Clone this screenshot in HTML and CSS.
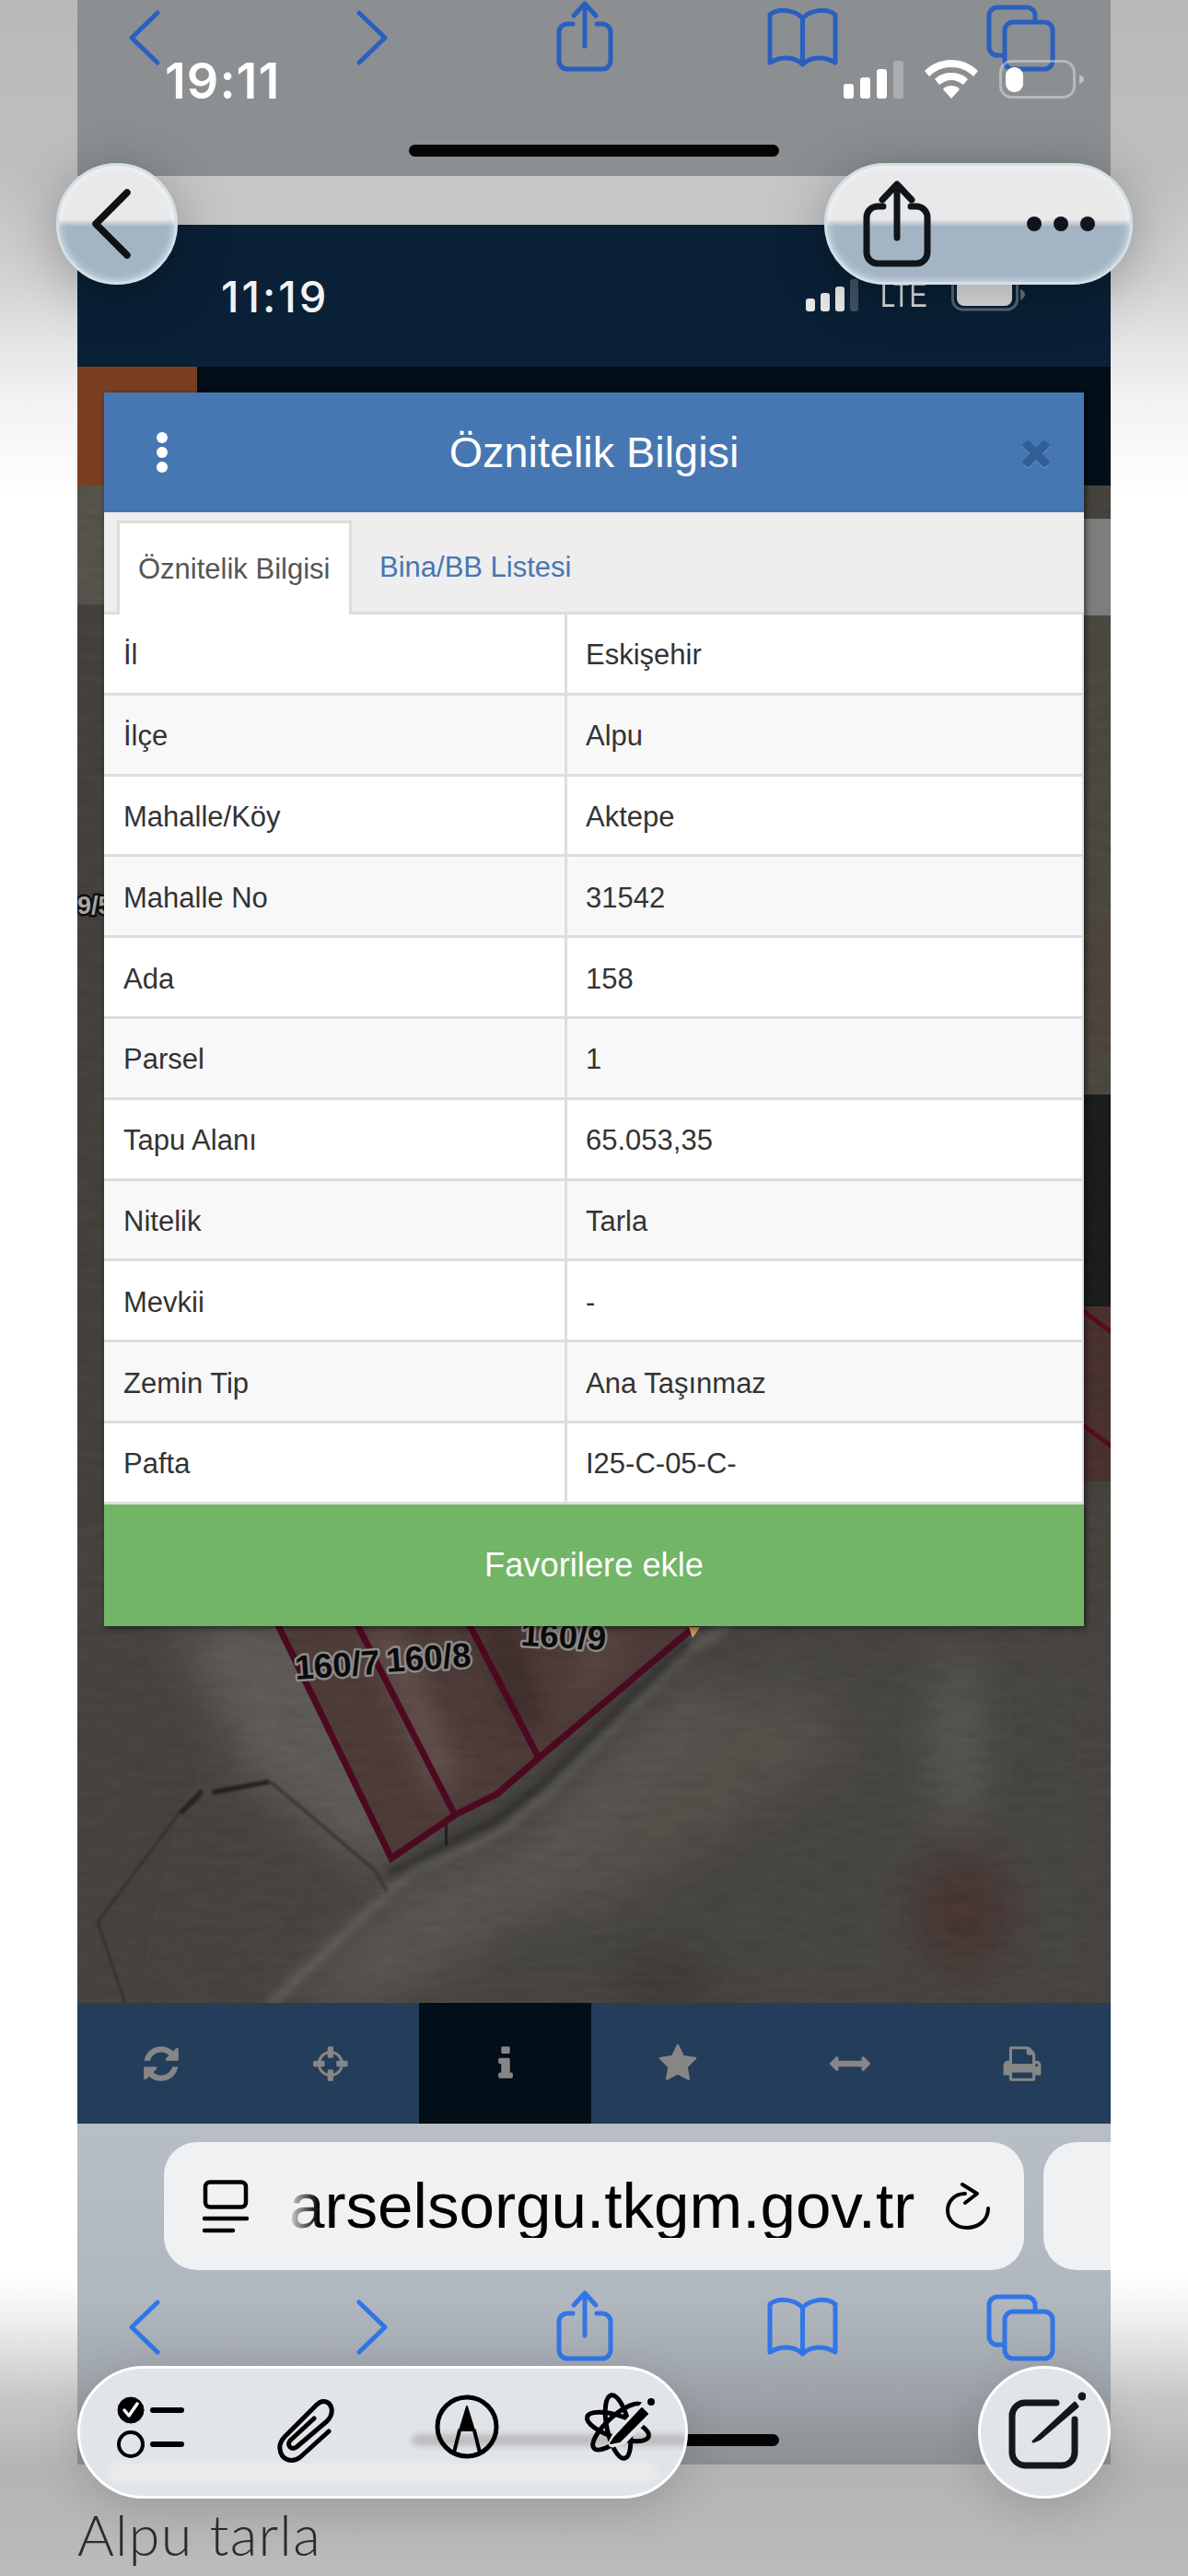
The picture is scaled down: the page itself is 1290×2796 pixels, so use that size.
FILE: index.html
```html
<!DOCTYPE html>
<html lang="tr">
<head>
<meta charset="utf-8">
<title>Öznitelik Bilgisi</title>
<link rel="stylesheet" href="styles.css">
</head>
<body>
<svg class="defs" width="0" height="0" aria-hidden="true">
  <symbol id="nav" viewBox="0 0 1122 80">
    <g fill="none" stroke="currentColor" stroke-width="5" stroke-linecap="round" stroke-linejoin="round">
      <path d="M87 14 L59 41 L87 68"/>
      <path d="M306 14 L334 41 L306 68"/>
      <path d="M538 26 H532 a9 9 0 0 0 -9 9 V66 a9 9 0 0 0 9 9 H570 a9 9 0 0 0 9 -9 V35 a9 9 0 0 0 -9 -9 H564"/>
      <path d="M551 50 V5 M539 17 L551 4 L563 17"/>
      <path d="M787.500 20 C780 11 762 8 752 16 V68 C765 60 780 62 787.500 70 C795 62 810 60 823 68 V16 C813 8 795 11 787.500 20 Z" stroke-width="5"/>
      <path d="M787.500 20 V68"/>
      <rect x="1007" y="24" width="52" height="51" rx="9"/>
      <path d="M1006 60 H999 a9 9 0 0 1 -9 -9 V17 a9 9 0 0 1 9 -9 H1031 a9 9 0 0 1 9 9 V23"/>
    </g>
  </symbol>
</svg>

<div class="page">
  <div class="phone">
    <section class="browser browser-top">
      <svg class="nav" viewBox="0 0 1122 80"><use href="#nav"/></svg>
      <div class="home"></div>
      <div class="status status-outer">
        <span class="time">19:11</span>
        <div class="status-icons">
          <svg width="65" height="42" viewBox="0 0 65 42">
            <rect x="0" y="26" width="11" height="16" rx="3" fill="#fff"/>
            <rect x="18" y="19" width="11" height="23" rx="3" fill="#fff"/>
            <rect x="36" y="10" width="11" height="32" rx="3" fill="#fff"/>
            <rect x="54" y="1" width="11" height="41" rx="3" fill="#fff" fill-opacity=".28"/>
          </svg>
          <svg width="58" height="42" viewBox="0 0 58 42">
            <path d="M29 0 C40 0 50 4 58 12 L53 18 C46 11 38 8 29 8 C20 8 12 11 5 18 L0 12 C8 4 18 0 29 0 Z M29 14 C36 14 42 16 47 21 L42 27 C38 24 34 22 29 22 C24 22 20 24 16 27 L11 21 C16 16 22 14 29 14 Z M29 28 C33 28 36 29 38 32 L29 42 L20 32 C22 29 25 28 29 28 Z" fill="#fff"/>
          </svg>
          <svg width="92" height="42" viewBox="0 0 92 42">
            <rect x="1.500" y="1.500" width="80" height="39" rx="12" fill="none" stroke="#fff" stroke-opacity=".38" stroke-width="3"/>
            <rect x="7" y="8" width="19" height="27" rx="9" fill="#fff"/>
            <path d="M87 16 C90 17 92 19 92 21 C92 23 90 25 87 26 Z" fill="#fff" fill-opacity=".45"/>
          </svg>
        </div>
      </div>
    </section>

    <div class="strip"></div>

    <div class="status status-inner">
      <span class="time time-small">11:19</span>
      <div class="status-icons status-icons-small">
        <svg width="57" height="35" viewBox="0 0 57 35">
          <rect x="0" y="21" width="10" height="14" rx="3" fill="#e8e8e8"/>
          <rect x="16" y="15" width="10" height="20" rx="3" fill="#e8e8e8"/>
          <rect x="32" y="8" width="10" height="27" rx="3" fill="#e8e8e8"/>
          <rect x="48" y="0" width="9" height="35" rx="3" fill="#e8e8e8" fill-opacity=".25"/>
        </svg>
        <span class="lte">LTE</span>
        <svg width="80" height="35" viewBox="0 0 80 35">
          <rect x="1.500" y="-4" width="70" height="37" rx="11" fill="none" stroke="#e8e8e8" stroke-opacity=".35" stroke-width="3"/>
          <rect x="6" y="-2" width="60" height="31" rx="8" fill="#dfdfdf"/>
          <path d="M75 11 C78 12 80 14 80 17 C80 19 78 21 75 23 Z" fill="#e8e8e8" fill-opacity=".4"/>
        </svg>
      </div>
    </div>

    <main class="stage">
      <svg class="map" viewBox="84 398 1122 1776" preserveAspectRatio="none" aria-hidden="true">
        <defs>
          <filter id="soft" x="-20%" y="-20%" width="140%" height="140%"><feGaussianBlur stdDeviation="14"/></filter>
          <filter id="softer" x="-30%" y="-30%" width="160%" height="160%"><feGaussianBlur stdDeviation="24"/></filter>
          <filter id="edge" x="-10%" y="-10%" width="120%" height="120%"><feGaussianBlur stdDeviation="4"/></filter>
          <filter id="hair" x="-10%" y="-10%" width="120%" height="120%"><feGaussianBlur stdDeviation="1"/></filter>
          <filter id="grain" x="0" y="0" width="100%" height="100%">
            <feTurbulence type="fractalNoise" baseFrequency="0.03 0.12" numOctaves="3" seed="7"/>
            <feColorMatrix values="0 0 0 0 0  0 0 0 0 0  0 0 0 0 0  0.9 0 0 0 -0.28"/>
          </filter>
        </defs>
        <rect x="84" y="398" width="1122" height="1776" fill="#484541"/>
        <!-- strips beside the dialog -->
        <rect x="84" y="526" width="29" height="130" fill="#57554e"/>
        <rect x="84" y="656" width="29" height="1000" fill="#46423e"/>
        <rect x="1177" y="668" width="29" height="520" fill="#4d4943"/>
        <rect x="1177" y="1000" width="29" height="140" fill="#4f473e"/>
        <rect x="1177" y="1188" width="29" height="230" fill="#1c1e1e"/>
        <rect x="1177" y="1418" width="29" height="190" fill="#4a3330"/>
        <path d="M1172 1420 L1210 1448 M1172 1544 L1210 1572" stroke="#5a0c22" stroke-width="5" fill="none"/>
        <text class="edge-label" x="84" y="992">9/5</text>

        <!-- fields below the dialog -->
        <g filter="url(#softer)">
          <path d="M190 1760 L370 1760 L450 1990 L400 2030 L270 1930 Z" fill="#605d58"/>
          <path d="M240 1950 L400 2040 L300 2160 L190 2160 Z" fill="#4a4440"/>
          <path d="M780 1780 L1206 1780 V2174 H320 L560 1980 Z" fill="#4a4743"/>
          <path d="M740 1850 L880 1830 L920 1900 L640 2080 L560 2070 Z" fill="#54514c"/>
          <path d="M300 2174 L450 2040 L560 2000 L740 1830 L800 1840 L600 2060 L420 2174 Z" fill="#5a5752"/>
          <ellipse cx="1040" cy="1890" rx="24" ry="100" fill="#5c5a55"/>
          <ellipse cx="1045" cy="2075" rx="55" ry="70" fill="#4a3834"/>
          <ellipse cx="720" cy="2150" rx="60" ry="36" fill="#3f3c38"/>
        </g>
        <!-- parcels -->
        <path d="M300 1760 L425 2017 L494 1970 L540 1947 L585 1908 L756 1762 Z" fill="#4f3d3a"/>
        <g filter="url(#soft)">
          <path d="M400 1765 L470 1950 L500 1930 L430 1765 Z" fill="#665250"/>
          <path d="M520 1765 L560 1880 L590 1860 L560 1765 Z" fill="#3f2e2c"/>
          <path d="M640 1770 L610 1850 L660 1820 L680 1770 Z" fill="#5a4643"/>
        </g>
        <!-- road edge -->
        <g fill="none" stroke-linecap="round" stroke-linejoin="round">
          <path d="M295 2174 L448 2030 L540 1990 L590 1950 L749 1790 L790 1765" stroke="#6b6863" stroke-width="8" stroke-opacity=".75" filter="url(#edge)"/>
          <path d="M425 2032 L540 1975 L590 1935 L745 1785" stroke="#2a2826" stroke-width="11" stroke-opacity=".6" filter="url(#edge)"/>
          <path d="M485 1975 L484 2000" stroke="#1c2120" stroke-width="11" filter="url(#hair)"/>
          <path d="M135 2172 L106 2086 L196 1966 L218 1950 M233 1945 L295 1935 L407 2030 L420 2052" stroke="#2b2a28" stroke-width="3" stroke-opacity=".6" filter="url(#hair)"/>
          <path d="M198 1966 L218 1945 M233 1945 L290 1934" stroke="#1d1c1b" stroke-width="5" stroke-opacity=".75" filter="url(#hair)"/>
        </g>
        <g fill="none" stroke="#4e0a22" stroke-width="7" stroke-linejoin="miter">
          <path d="M300 1760 L425 2017 L494 1970 L540 1947 L585 1908 L756 1764"/>
          <path d="M386 1760 L494 1970"/>
          <path d="M508 1760 L585 1908"/>
        </g>
        <path d="M748 1766 L760 1766 L752 1778 Z" fill="#c89a5a"/>
        <rect x="84" y="398" width="1122" height="1776" filter="url(#grain)" opacity=".14"/>
        <g class="labels">
          <text transform="translate(321 1823) rotate(-4)">160/7</text>
          <text transform="translate(420 1815) rotate(-4)">160/8</text>
          <text transform="translate(565 1786) rotate(3)">160/9</text>
        </g>
      </svg>

      <div class="topband"><div class="topband-accent"></div></div>
      <div class="edge-box"></div>

      <section class="dialog">
        <header class="dialog-head">
          <span class="kebab"><i></i><i></i><i></i></span>
          <h1>Öznitelik Bilgisi</h1>
          <svg class="close" viewBox="0 0 1792 1792"><path d="M1490 1322q0 40-28 68l-136 136q-28 28-68 28t-68-28l-294-294-294 294q-28 28-68 28t-68-28l-136-136q-28-28-28-68t28-68l294-294-294-294q-28-28-28-68t28-68l136-136q28-28 68-28t68 28l294 294 294-294q28-28 68-28t68 28l136 136q28 28 28 68t-28 68l-294 294 294 294q28 28 28 68z"/></svg>
        </header>
        <nav class="tabs">
          <span class="tab tab-active">Öznitelik Bilgisi</span>
          <span class="tab">Bina/BB Listesi</span>
        </nav>
        <div class="rows">
          <div class="row"><span>İl</span><span>Eskişehir</span></div>
          <div class="row"><span>İlçe</span><span>Alpu</span></div>
          <div class="row"><span>Mahalle/Köy</span><span>Aktepe</span></div>
          <div class="row"><span>Mahalle No</span><span>31542</span></div>
          <div class="row"><span>Ada</span><span>158</span></div>
          <div class="row"><span>Parsel</span><span>1</span></div>
          <div class="row"><span>Tapu Alanı</span><span>65.053,35</span></div>
          <div class="row"><span>Nitelik</span><span>Tarla</span></div>
          <div class="row"><span>Mevkii</span><span>-</span></div>
          <div class="row"><span>Zemin Tip</span><span>Ana Taşınmaz</span></div>
          <div class="row"><span>Pafta</span><span>I25-C-05-C-</span></div>
        </div>
        <button class="fav">Favorilere ekle</button>
      </section>
    </main>

    <nav class="toolbar">
      <span class="tool"><svg viewBox="0 0 1792 1792"><path d="M1639 1056q0 5-1 7-64 268-268 434.5t-478 166.5q-146 0-282.5-55t-243.500-157l-129 129q-19 19-45 19t-45-19-19-45v-448q0-26 19-45t45-19h448q26 0 45 19t19 45-19 45l-137 137q71 66 161 102t187 36q134 0 250-65t186-179q11-17 53-117 8-23 30-23h192q13 0 22.500 9.500t9.500 22.500zm25-800v448q0 26-19 45t-45 19h-448q-26 0-45-19t-19-45 19-45l138-138q-148-137-349-137-134 0-250 65t-186 179q-11 17-53 117-8 23-30 23h-199q-13 0-22.500-9.500t-9.500-22.500v-7q65-268 270-434.500t480-166.500q146 0 284 55.500t245 156.500l130-129q19-19 45-19t45 19 19 45z"/></svg></span>
      <span class="tool"><svg viewBox="0 0 1792 1792"><path d="M1197 1024h-109q-26 0-45-19t-19-45v-128q0-26 19-45t45-19h109q-32-108-112.500-188.500t-188.500-112.500v109q0 26-19 45t-45 19h-128q-26 0-45-19t-19-45v-109q-108 32-188.500 112.500t-112.500 188.500h109q26 0 45 19t19 45v128q0 26-19 45t-45 19h-109q32 108 112.500 188.500t188.500 112.500v-109q0-26 19-45t45-19h128q26 0 45 19t19 45v109q108-32 188.500-112.500t112.500-188.500zm339-192v128q0 26-19 45t-45 19h-143q-37 161-154.500 278.500t-278.500 154.500v143q0 26-19 45t-45 19h-128q-26 0-45-19t-19-45v-143q-161-37-278.500-154.500t-154.500-278.500h-143q-26 0-45-19t-19-45v-128q0-26 19-45t45-19h143q37-161 154.500-278.500t278.500-154.500v-143q0-26 19-45t45-19h128q26 0 45 19t19 45v143q161 37 278.500 154.500t154.500 278.500h143q26 0 45 19t19 45z"/></svg></span>
      <span class="tool tool-active"><svg viewBox="0 0 1792 1792"><path d="M1216 1344v128q0 26-19 45t-45 19h-512q-26 0-45-19t-19-45v-128q0-26 19-45t45-19h64v-384h-64q-26 0-45-19t-19-45v-128q0-26 19-45t45-19h384q26 0 45 19t19 45v576h64q26 0 45 19t19 45zm-128-1152v192q0 26-19 45t-45 19h-256q-26 0-45-19t-19-45v-192q0-26 19-45t45-19h256q26 0 45 19t19 45z"/></svg></span>
      <span class="tool"><svg viewBox="0 0 1792 1792"><path d="M1728 647q0 22-26 48l-363 354 86 500q1 7 1 20 0 21-10.500 35.500t-30.500 14.500q-19 0-40-12l-449-236-449 236q-22 12-40 12-21 0-31.500-14.500t-10.500-35.500q0-6 2-20l86-500-364-354q-25-27-25-48 0-37 56-46l502-73 225-455q19-41 49-41t49 41l225 455 502 73q56 9 56 46z"/></svg></span>
      <span class="tool"><svg viewBox="0 0 1792 1792"><path d="M1792 896q0 26-19 45l-256 256q-19 19-45 19t-45-19-19-45v-128h-1024v128q0 26-19 45t-45 19-45-19l-256-256q-19-19-19-45t19-45l256-256q19-19 45-19t45 19 19 45v128h1024v-128q0-26 19-45t45-19 45 19l256 256q19 19 19 45z"/></svg></span>
      <span class="tool"><svg viewBox="0 0 1792 1792"><path d="M448 1536h896v-256h-896v256zm0-640h896v-384h-160q-40 0-68-28t-28-68v-160h-640v640zm1152 64q0-26-19-45t-45-19-45 19-19 45 19 45 45 19 45-19 19-45zm128 0v416q0 13-9.500 22.500t-22.500 9.500h-224v160q0 40-28 68t-68 28h-960q-40 0-68-28t-28-68v-160h-224q-13 0-22.500-9.500t-9.500-22.500v-416q0-79 56.500-135.500t135.500-56.500h64v-544q0-40 28-68t68-28h672q40 0 88 20t76 48l152 152q28 28 48 76t20 88v256h64q79 0 135.500 56.500t56.500 135.500z"/></svg></span>
    </nav>

    <section class="browser browser-bottom">
      <div class="url-row">
        <div class="url">
          <svg class="reader" width="50" height="58" viewBox="0 0 50 58" fill="none" stroke="#000" stroke-linecap="round" stroke-width="4.500">
            <rect x="3" y="2.500" width="44" height="27" rx="5"/>
            <path d="M2 42 H48 M2 55 H33"/>
          </svg>
          <span class="url-text">arselsorgu.tkgm.gov.tr</span>
          <svg class="reload" width="50" height="52" viewBox="0 0 50 52" fill="none" stroke="#000" stroke-linecap="round" stroke-linejoin="round" stroke-width="4">
            <path d="M22 12 C10 12 3 21 3 30 C3 41 12 49 24 49 C36 49 47 41 47 28"/>
            <path d="M19 2 L35 12 L22 22"/>
          </svg>
        </div>
        <div class="url url-next"></div>
      </div>
      <svg class="nav" viewBox="0 0 1122 80"><use href="#nav"/></svg>
      <div class="home"></div>
    </section>
  </div>

  <p class="caption">Alpu tarla</p>

  <!-- floating glass controls -->
  <div class="glass glass-back">
    <svg width="50" height="76" viewBox="0 0 50 76" fill="none" stroke="#111" stroke-width="7.500" stroke-linecap="round" stroke-linejoin="round"><path d="M41 4 L7 38 L41 72"/></svg>
  </div>
  <div class="glass glass-actions">
    <svg width="74" height="94" viewBox="0 0 74 94" fill="none" stroke="#10151b" stroke-width="7" stroke-linecap="round" stroke-linejoin="round">
      <path d="M22 28 H16 a12 12 0 0 0 -12 12 V78 a12 12 0 0 0 12 12 H58 a12 12 0 0 0 12 -12 V40 a12 12 0 0 0 -12 -12 H52"/>
      <path d="M37 62 V5 M21 21 L37 4 L53 21"/>
    </svg>
    <span class="dots"><i></i><i></i><i></i></span>
  </div>

  <div class="glass-tools">
    <svg class="t-icon" width="90" height="80" viewBox="0 0 90 80" fill="none" stroke="#000" stroke-linecap="round">
      <circle cx="22" cy="22" r="14" fill="#000"/>
      <path d="M15 22 L20 28 L29 15" stroke="#fff" stroke-width="3.500" stroke-linejoin="round"/>
      <circle cx="22" cy="59" r="13" stroke-width="4"/>
      <path d="M46 22 H77 M46 59 H77" stroke-width="6"/>
    </svg>
    <svg class="t-icon" width="90" height="80" viewBox="-11 -1 90 80" fill="none" stroke="#000" stroke-linecap="round" stroke-linejoin="round" stroke-width="5">
      <path d="M57 44 L26 72 C17 79 5 75 4 63 C3 57 6 53 10 49 L44 15 C50 9 58 11 60 19 C61 24 59 29 55 33 L22 61 C16 65 11 59 15 54 L41 30"/>
    </svg>
    <svg class="t-icon" width="90" height="80" viewBox="-4 0 90 80" fill="none" stroke="#000" stroke-width="5" stroke-linecap="round" stroke-linejoin="round">
      <circle cx="45" cy="40" r="32"/>
      <path d="M45 18 L37 44 H53 Z" fill="#000" stroke-width="2"/>
      <path d="M37 44 L31 68 M53 44 L59 68" stroke-width="4"/>
    </svg>
    <svg class="t-icon" width="90" height="80" viewBox="0 0 90 80" fill="none" stroke="#000" stroke-width="5" stroke-linecap="round" stroke-linejoin="round">
      <ellipse cx="44" cy="40" rx="35" ry="12" transform="rotate(78 44 40)"/>
      <ellipse cx="44" cy="40" rx="35" ry="12" transform="rotate(18 44 40)"/>
      <ellipse cx="44" cy="40" rx="35" ry="12" transform="rotate(-42 44 40)"/>
      <path d="M42 50 L74 16 L81 22 L50 54 L38 58 Z" fill="#e1e5e9" stroke="#e1e5e9" stroke-width="9"/>
      <path d="M40 52 L70 20 L76 26 L46 56 L36 58 Z" fill="#000" stroke-width="2"/>
      <circle cx="80" cy="13" r="4" fill="#000" stroke="none"/>
    </svg>
    <span class="tools-shine"></span>
  </div>
  <div class="glass-compose">
    <svg width="90" height="96" viewBox="0 0 90 96" fill="none" stroke="#14181d" stroke-width="7" stroke-linecap="round" stroke-linejoin="round">
      <path d="M58 16 H24 a14 14 0 0 0 -14 14 V70 a14 14 0 0 0 14 14 H64 a14 14 0 0 0 14 -14 V34"/>
      <path d="M33 58 L78 16 L81 20 L40 55 Z" fill="#14181d" stroke-width="3"/>
      <circle cx="86" cy="9" r="3.500" fill="#14181d" stroke-width="2"/>
    </svg>
  </div>
</div>
</body>
</html>
```
FILE: styles.css
```css
* { box-sizing: border-box; }

html, body { margin: 0; padding: 0; }

body { font-family: "Liberation Sans", Arial, sans-serif; }

.defs { position: absolute; }

.page {
  position: relative;
  width: 1290px;
  height: 2796px;
  overflow: hidden;
  padding: 0 84px;
  background:
    linear-gradient(180deg,
      #b9b9b9 0, #bfbfbf 190px, #d2d2d2 300px, #f2f2f2 430px, #fff 540px,
      #fff 2470px, #eeeeee 2520px, #c8c8c8 2600px, #b4b4b4 2680px, #bbb 2796px);
}

.phone {
  display: flex;
  flex-direction: column;
  width: 1122px;
  height: 2675px;
  overflow: hidden;
}

/* Safari chrome */
.browser { position: relative; flex: none; }

.browser-top {
  height: 191px;
  background: #8b8f92;
  color: #2a5fbf;
}

.browser-bottom {
  height: 370px;
  padding-top: 20px;
  color: #3176e6;
  background: linear-gradient(180deg, #b7bec4 0, #b0b7bf 190px, #a6acb4 250px, #8c9094 370px);
}

.nav { display: block; width: 1122px; height: 80px; }

.home {
  width: 402px;
  height: 13px;
  margin: 77px auto 0;
  border-radius: 7px;
  background: #050505;
}

.strip { flex: none; height: 53px; background: #c6c6c6; }

/* status bars */
.status { display: flex; justify-content: space-between; align-items: flex-start; }

.status-outer {
  position: absolute;
  top: 65px;
  left: 0;
  right: 0;
  padding: 0 29px 0 95px;
}

.status-inner {
  flex: none;
  height: 154px;
  padding: 59px 93px 0 156px;
  background: #0a2036;
}

.time {
  position: relative;
  top: 2px;
  font-family: Inter, "Liberation Sans", sans-serif;
  font-size: 54px;
  font-weight: 600;
  line-height: 42px;
  letter-spacing: 1px;
  color: #fff;
}

.time-small { font-size: 47px; font-weight: 500; line-height: 34px; letter-spacing: 3px; color: #f2f2f2; }

.status-icons { display: flex; align-items: flex-end; gap: 23px; }

.status-icons-small { gap: 24px; }

.lte {
  width: 53px;
  font-family: "Liberation Sans", sans-serif;
  font-size: 37px;
  line-height: 34px;
  color: #dcdcdc;
  white-space: nowrap;
  transform: scaleX(.78);
  transform-origin: 0 50%;
}

/* map stage */
.stage {
  position: relative;
  flex: none;
  height: 1776px;
  overflow: hidden;
}

.map { position: absolute; inset: 0; width: 100%; height: 100%; }

.edge-label { font: bold 27px "Liberation Sans", sans-serif; fill: #aaa; stroke: #111; stroke-width: 5; paint-order: stroke; }

.labels text {
  font: bold 37px "Liberation Sans", sans-serif;
  fill: #0b0b0b;
  stroke: #8d8a88;
  stroke-width: 5;
  stroke-linejoin: round;
  paint-order: stroke;
}

.topband { position: relative; height: 129px; background: #020e18; }

.topband-accent { width: 130px; height: 100%; background: #7a3e20; }

.edge-box {
  position: absolute;
  top: 165px;
  right: 0;
  width: 29px;
  height: 105px;
  background: #7d7d7c;
}

.dialog {
  position: absolute;
  top: 28px;
  left: 29px;
  width: 1064px;
  box-shadow: 2px 2px 6px rgba(0, 0, 0, .55);
}

.dialog-head {
  position: relative;
  display: flex;
  align-items: center;
  justify-content: center;
  height: 130px;
  background: #4777b2;
}

.dialog-head h1 {
  margin: 0;
  font-size: 46.800px;
  font-weight: 400;
  color: #fff;
}

.kebab {
  position: absolute;
  left: 57px;
  top: 43px;
  display: flex;
  flex-direction: column;
  gap: 4px;
}

.kebab i { width: 12px; height: 12px; border-radius: 50%; background: #fff; }

.close {
  position: absolute;
  right: 30px;
  top: 43px;
  width: 44px;
  height: 44px;
  fill: #2f5f96;
  filter: drop-shadow(0 1px 0 #6f9bd0);
}

.tabs {
  display: flex;
  height: 111px;
  padding: 9px 0 0 14px;
  background: #eee;
  border-bottom: 3px solid #ddd;
}

.tab {
  display: flex;
  align-items: center;
  height: 102px;
  padding: 0 30px;
  font-size: 31px;
  color: #4777b2;
  white-space: nowrap;
}

.tab-active {
  width: 255px;
  padding: 0 20px;
  margin-right: 0;
  border: 3px solid #ddd;
  border-bottom: 0;
  background: #fff;
  color: #555;
}

.rows { background: #fff; }

.row {
  display: grid;
  grid-template-columns: 500px 1fr;
  height: 87.800px;
  border-bottom: 3px solid #ddd;
  border-right: 2px solid #ddd;
  font-size: 31px;
  color: #333;
}

.row:nth-child(even) { background: #f8f8f8; }

.row span { display: flex; align-items: center; padding: 4px 0 0 21px; }

.row span + span { border-left: 3px solid #ddd; padding-left: 20px; }

.fav {
  display: block;
  width: 100%;
  height: 132px;
  padding: 0;
  border: 0;
  background: #72b566;
  font: 36.300px "Liberation Sans", sans-serif;
  color: #fff;
}

/* bottom tools */
.toolbar {
  flex: none;
  display: grid;
  grid-template-columns: repeat(6, 187px);
  height: 131px;
  margin-left: -3px;
  width: 1125px;
  background: #233d5b;
}

.tool { display: flex; align-items: center; justify-content: center; }

.tool svg { width: 44px; height: 44px; fill: #868686; }

.tool-active { background: #020e18; }

.url-row { display: flex; gap: 21px; height: 139px; margin-bottom: 21px; padding-left: 94px; }

.url {
  display: flex;
  align-items: center;
  flex: none;
  width: 934px;
  padding-left: 42px;
  border-radius: 36px;
  background: #f0f1f3;
}

.url-next { width: 80px; border-radius: 36px 0 0 36px; }

.reader { flex: none; }

.url-text {
  margin-left: 44px;
  font-size: 69.200px;
  line-height: 1;
  color: #000;
  white-space: nowrap;
  -webkit-mask-image: linear-gradient(90deg, rgba(0,0,0,.1) 0, #000 32px);
  mask-image: linear-gradient(90deg, rgba(0,0,0,.1) 0, #000 32px);
}

.reload { flex: none; margin-left: 33px; }

/* caption */
.caption {
  margin: 41px 0 0 0;
  font-family: Lato, "Liberation Sans", sans-serif;
  font-size: 61px;
  font-weight: 300;
  line-height: 70px;
  letter-spacing: 1.300px;
  color: #2c2c2c;
}

/* floating glass */
.glass {
  position: absolute;
  top: 177px;
  height: 132px;
  border: 3px solid #d3e0e8;
  background: linear-gradient(180deg, #e9e9e9 0, #e9e9e9 58px, #a3b5c5 66px, #a3b5c5 100%);
  box-shadow: 0 10px 60px rgba(0, 0, 0, .28), inset 0 0 8px rgba(255, 255, 255, .7);
}

.glass-back {
  left: 61px;
  width: 132px;
  border-radius: 50%;
  display: flex;
  align-items: center;
  padding-left: 33px;
}

.glass-actions {
  left: 895px;
  width: 335px;
  border-radius: 66px;
  display: flex;
  align-items: center;
  justify-content: space-between;
  padding: 0 38px 0 39px;
}

.dots { display: flex; gap: 13px; }

.dots i { width: 16px; height: 16px; border-radius: 50%; background: #10151b; }

.glass-tools {
  position: absolute;
  left: 84px;
  top: 2568px;
  width: 663px;
  height: 144px;
  display: flex;
  align-items: center;
  gap: 79px;
  padding: 0 0 0 33px;
  border: 3px solid #fff;
  border-radius: 72px;
  background: #e1e5e9;
  box-shadow: 0 14px 50px rgba(0, 0, 0, .14);
  overflow: hidden;
}

.t-icon { flex: none; position: relative; z-index: 1; margin-top: -12px; }

.glass-tools::before {
  content: "";
  position: absolute;
  left: 360px;
  top: 71px;
  width: 300px;
  height: 13px;
  border-radius: 7px;
  background: #bcbdbf;
  filter: blur(3px);
}

.tools-shine {
  position: absolute;
  left: 30px;
  right: 30px;
  bottom: 14px;
  height: 22px;
  border-radius: 11px;
  background: #e9eaea;
  filter: blur(3px);
}

.glass-compose {
  position: absolute;
  left: 1062px;
  top: 2568px;
  width: 144px;
  height: 144px;
  display: flex;
  align-items: center;
  justify-content: center;
  border: 3px solid #fff;
  border-radius: 50%;
  background: #e1e5e9;
  box-shadow: 0 14px 50px rgba(0, 0, 0, .14);
}
```
